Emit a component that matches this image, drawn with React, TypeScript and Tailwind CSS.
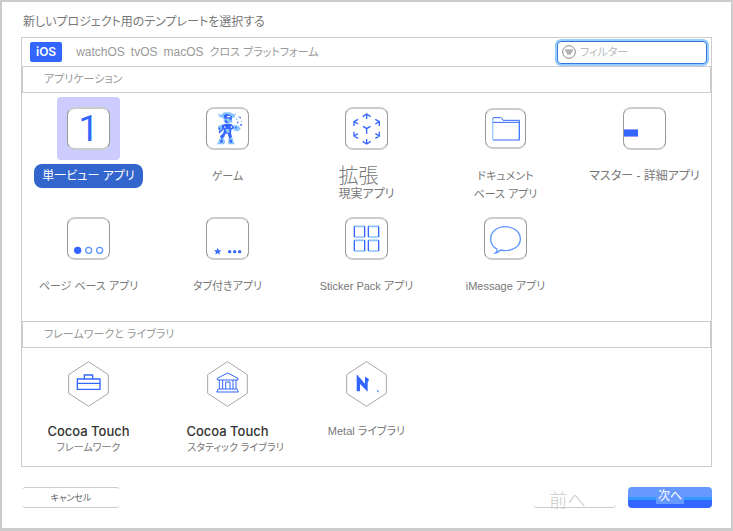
import type { ReactNode } from "react";

const BLUE = "#3366ff";

function Tile({ children, small }: { children?: ReactNode; small?: boolean }) {
  return (
    <span
      className={
        "flex items-center justify-center overflow-hidden rounded-lg border-x border-y-2 border-x-[#999] border-y-[#ccc] bg-white " +
        (small ? "size-[41px]" : "size-[43px]")
      }
    >
      {children}
    </span>
  );
}

function TileArt({ children }: { children: ReactNode }) {
  return (
    <svg viewBox="0 0 129 129" className="size-[43px] shrink-0" fill="none" stroke={BLUE} strokeWidth="4" aria-hidden="true">
      {children}
    </svg>
  );
}

function Hexagon({ children }: { children: ReactNode }) {
  return (
    <svg viewBox="0 0 123 138" className="h-[46px] w-[41px]" fill="none" stroke={BLUE} strokeWidth="4" aria-hidden="true">
      <path d="M61.500 2 121 41V97L61.500 136 2 97V41Z" stroke="#a6a6a6" strokeWidth="3" fill="#fff" />
      {children}
    </svg>
  );
}

function Robot() {
  return (
    <TileArt>
      <g stroke="none">
        <path
          fill="#8cc4ff"
          d="M36 18 44 24 54 16H72L84 22 90 18 86 31 78 34 79 46 66 50 54 45 52 34 40 30ZM36 58 48 52 53 60 46 72 36 68ZM82 55 92 54 100 59 104 66 96 73 84 71ZM40 95 52 92 58 104 54 112H33L37 104ZM68 94 80 92 82 102 86 112H66Z"
        />
        <path
          fill={BLUE}
          d="M53 25 62 20 78 28 76 42 68 34 56 36ZM58 38 66 44 64 49 56 46ZM37 62H44L40 71ZM48 54 60 50 76 51 84 60 82 67 77 66 75 77 78 90 70 96 65 80 58 80 55 90 46 96 42 88 52 78 54 66 46 74 40 80 38 72 48 68ZM86 60 93 60 90 66ZM44 98 51 98 48 107 42 106ZM70 98 77 98 79 107H72ZM93 44H97V49H93ZM100 30H105V34H100ZM103 51H108V56H103Z"
        />
        <path fill="#8cc4ff" d="M58 66H70V77H62ZM96 27H100V31H96ZM90 34H94V39H90ZM105 41H109V45H105ZM98 63H103V67H98Z" />
        <path fill="#fff" d="M63 27H73V31H63ZM55 58H58V63H55ZM74 58H78V62H74ZM56 88H66V94H60Z" />
      </g>
    </TileArt>
  );
}

function ArCube() {
  return (
    <TileArt>
      <path d="M65 36V21M53 29 65 21 77 29M65 96V111M53 103 65 111 77 103" />
      <path d="M54 58 65 65 76 58M65 65V80" />
      <path d="M27 57V44L39 37M27 44 39 51M103 57V44L91 37M103 44 91 51" />
      <path d="M27 74V87L39 94M27 87 39 80M103 74V87L91 94M103 87 91 80" />
    </TileArt>
  );
}

function Folder() {
  return (
    <svg viewBox="0 0 84 72" className="h-6 w-7 shrink-0" fill="none" strokeWidth="3" aria-hidden="true">
      <path d="M2 6V66Q2 69 5 69M82 15V66Q82 69 79 69" stroke="#99ccff" strokeWidth="4" />
      <path d="M2 6Q2 2 6 2H26Q30 2 33 10H82V69H4M2 16H82" stroke={BLUE} />
    </svg>
  );
}

function PageDots() {
  return (
    <TileArt>
      <circle cx="32" cy="100" r="9" fill={BLUE} />
      <circle cx="65" cy="100" r="9" stroke="#5e95ff" />
      <circle cx="98" cy="100" r="9" stroke="#5e95ff" />
    </TileArt>
  );
}

function StarDots() {
  return (
    <TileArt>
      <g fill={BLUE} stroke="none">
        <path d="M35 92 38 100 46 100 40 105 42 113 35 108 28 113 30 105 24 100 32 100Z" />
        <circle cx="71" cy="104" r="5" />
        <circle cx="86" cy="104" r="5" />
        <circle cx="101" cy="104" r="5" />
      </g>
    </TileArt>
  );
}

function Stickers() {
  const cells = [
    [28, 28],
    [70, 28],
    [28, 70],
    [70, 70],
  ];
  return (
    <TileArt>
      {cells.map(([x, y]) => (
        <g key={`${x}-${y}`}>
          <path d={`M${x} ${y}h31M${x} ${y + 32}h31`} stroke="#8cc0ff" strokeWidth="5" />
          <path d={`M${x} ${y}v32M${x + 31} ${y}v32`} />
        </g>
      ))}
    </TileArt>
  );
}

function Bubble() {
  return (
    <TileArt>
      <path
        d="M39 96C27 90 20 79 20 66C20 44 40 29 64 29S109 44 109 66S88 101 64 101C58 101 53 100 49 99Q43 107 34 108Q40 103 39 96Z"
        stroke="#5e95ff"
      />
    </TileArt>
  );
}

type Template = {
  id: string;
  icon: ReactNode;
  label: ReactNode;
  large?: boolean;
  selected?: boolean;
};

const applications: Template[] = [
  {
    id: "single",
    selected: true,
    large: true,
    icon: (
      <Tile>
        <span className="font-[Roboto,sans-serif] text-4xl font-normal text-[#3366ff] [font-feature-settings:normal]">1</span>
      </Tile>
    ),
    label: "単一ビュー アプリ",
  },
  { id: "game", icon: <Tile><Robot /></Tile>, label: "ゲーム" },
  {
    id: "ar",
    large: true,
    icon: <Tile><ArCube /></Tile>,
    label: (
      <>
        <span className="block pr-4 text-xl leading-[18px] font-light">拡張</span>
        現実アプリ
      </>
    ),
  },
  {
    id: "document",
    icon: <Tile small><Folder /></Tile>,
    label: (
      <>
        ドキュメント
        <br />
        ベース アプリ
      </>
    ),
  },
  {
    id: "master",
    large: true,
    icon: (
      <Tile>
        <span className="mt-2 mr-auto h-2 w-3.5 border-y border-[#99f] bg-[#3366ff]" />
      </Tile>
    ),
    label: "マスター - 詳細アプリ",
  },
  { id: "page", icon: <Tile><PageDots /></Tile>, label: "ページ ベース アプリ" },
  { id: "tabbed", icon: <Tile><StarDots /></Tile>, label: "タブ付きアプリ" },
  { id: "sticker", icon: <Tile><Stickers /></Tile>, label: "Sticker Pack アプリ" },
  { id: "imessage", icon: <Tile><Bubble /></Tile>, label: "iMessage アプリ" },
];

const cocoa = "block font-[Inter,sans-serif] text-[13px] leading-[18px] font-medium text-[#333]";

const libraries: Template[] = [
  {
    id: "framework",
    icon: (
      <Hexagon>
        <path d="M28 54H96V85H28ZM28 67H96M49 53V42H74V53" />
      </Hexagon>
    ),
    label: (
      <>
        <span className={cocoa}>Cocoa Touch</span>
        <span className="block text-[10px] leading-4">フレームワーク</span>
      </>
    ),
  },
  {
    id: "static",
    icon: (
      <Hexagon>
        <path
          d="M31 57V52L62 36 93 52V57ZM37 57V84M47 57V84M78 57V84M87 57V84M56 84V63H69V84M34 84H90L94 93H29Z"
          strokeWidth="3"
        />
      </Hexagon>
    ),
    label: (
      <>
        <span className={cocoa}>Cocoa Touch</span>
        <span className="block pl-4 text-[10px] leading-4">スタティック ライブラリ</span>
      </>
    ),
  },
  {
    id: "metal",
    icon: (
      <Hexagon>
        <path d="M32 40 57 68V47L68 53V60L65 64V92L42 69V91H32Z" fill={BLUE} stroke="none" />
        <path d="M92 86 98 89V94H94Z" fill="#6699ff" stroke="none" />
      </Hexagon>
    ),
    label: "Metal ライブラリ",
  },
];

function TemplateGrid({ items }: { items: Template[] }) {
  return (
    <div className="-mx-[3px] grid auto-rows-[110px] grid-cols-5 py-1">
      {items.map((t) => (
        <button
          key={t.id}
          type="button"
          aria-pressed={!!t.selected}
          className="flex flex-col items-center gap-1 text-center whitespace-nowrap text-[#777]"
        >
          <span
            className={
              "flex size-[63px] shrink-0 items-center justify-center rounded-sm " + (t.selected ? "bg-[#ccccff]" : "")
            }
          >
            {t.icon}
          </span>
          <span
            className={
              "block py-[3px] leading-[18px] " +
              (t.large ? "text-xs leading-[18px] " : "text-[11px] ") +
              (t.selected ? "rounded-lg bg-[#3366cc] px-2 text-white" : "")
            }
          >
            {t.label}
          </span>
        </button>
      ))}
    </div>
  );
}

function SectionBar({ children }: { children: ReactNode }) {
  return (
    <h2 className="flex h-[27px] items-center border border-[#ccc] px-[21px] text-[11px] font-normal text-[#999]">
      {children}
    </h2>
  );
}

export default function App() {
  return (
    <main className="flex min-h-screen flex-col border-2 border-b-3 border-[#ccc] bg-white px-[19px] pt-2 pb-5 font-['Liberation_Sans','Noto_Sans_CJK_JP',sans-serif] [font-feature-settings:'palt']">
      <h1 className="h-[27px] px-0.5 text-xs leading-6 font-normal text-[#777]">
        新しいプロジェクト用のテンプレートを選択する
      </h1>

      <section className="flex-1 overflow-hidden border border-[#ccc]">
        <header className="flex h-7 items-center pr-1 pl-2">
          <nav className="flex items-center gap-1.5 text-xs text-[#999]">
            <button
              type="button"
              className="mr-2 h-5 rounded-xs bg-[#3366ff] px-1.5 font-[Inter,sans-serif] text-xs font-semibold text-white"
            >
              iOS
            </button>
            <button type="button">watchOS</button>
            <button type="button">tvOS</button>
            <button type="button">macOS</button>
            <button type="button" className="text-[11px]">クロス プラットフォーム</button>
          </nav>
          <label className="ml-auto flex h-[23px] w-[150px] items-center gap-1 rounded-sm border border-[#3377dd] bg-white px-1 ring-2 ring-[#99ccff]">
            <svg viewBox="0 0 42 42" className="size-3.5 shrink-0" aria-hidden="true">
              <circle cx="21" cy="21" r="19" fill="none" stroke="#888" strokeWidth="3" />
              <path d="M9 13H33V19H30V24H27V29H15V24H12V19H9Z" fill="#b3b3b3" />
            </svg>
            <input
              type="text"
              aria-label="フィルター"
              placeholder="フィルター"
              className="w-full min-w-0 bg-transparent text-[11px] leading-4 text-[#777] outline-none placeholder:text-[#bbb]"
            />
          </label>
        </header>

        <SectionBar>アプリケーション</SectionBar>
        <TemplateGrid items={applications} />
        <SectionBar>フレームワークと ライブラリ</SectionBar>
        <TemplateGrid items={libraries} />
      </section>

      <footer className="mt-5 flex items-center">
        <button
          type="button"
          className="h-[21px] w-[100px] rounded-[5px] border border-x-transparent border-y-[#ccc] text-[9px] leading-4 text-[#666]"
        >
          キャンセル
        </button>
        <button
          type="button"
          disabled
          className="mr-3 ml-auto h-[21px] w-[83px] rounded-sm border-b border-[#ccc] pr-3.5 text-lg leading-7 font-light text-[#ccc]"
        >
          前へ
        </button>
        <button
          type="button"
          className="flex h-[21px] w-[84px] justify-center rounded-sm bg-linear-[180deg,#6699ff_48%,#3399ff_48%,#3399ff_62%,#3366ff_62%] text-xs text-white"
        >
          <span className="h-[17px] bg-[#6699ff] px-0.5 leading-[18px]">次へ</span>
        </button>
      </footer>
    </main>
  );
}
